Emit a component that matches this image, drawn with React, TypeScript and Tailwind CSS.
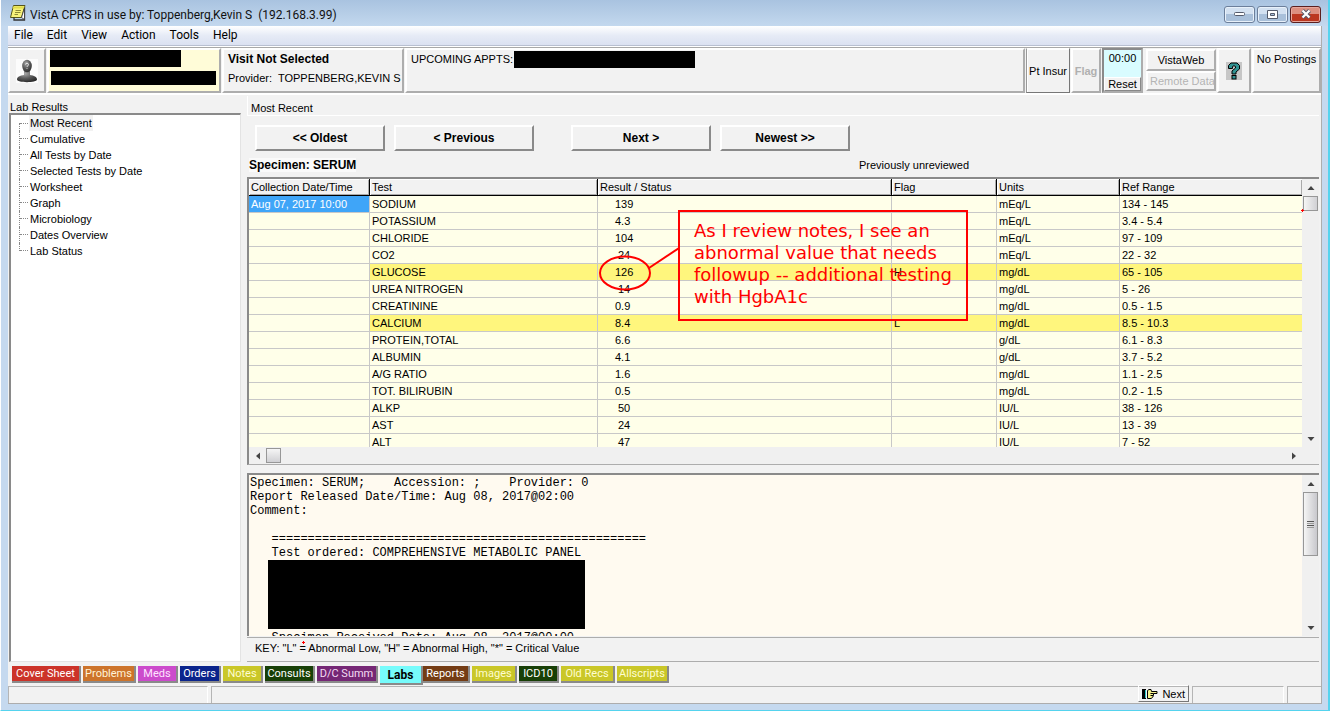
import type { ReactNode } from "react";

const SANS = "font-['Liberation_Sans',Arial,sans-serif]";
const UI = "font-[Roboto,'Segoe_UI',sans-serif]";

type Result = { test: string; value: string; flag: string; units: string; range: string };

const RESULTS: Result[] = [
  { test: "SODIUM", value: "139", flag: "", units: "mEq/L", range: "134 - 145" },
  { test: "POTASSIUM", value: "4.3", flag: "", units: "mEq/L", range: "3.4 - 5.4" },
  { test: "CHLORIDE", value: "104", flag: "", units: "mEq/L", range: "97 - 109" },
  { test: "CO2", value: "24", flag: "", units: "mEq/L", range: "22 - 32" },
  { test: "GLUCOSE", value: "126", flag: "H", units: "mg/dL", range: "65 - 105" },
  { test: "UREA NITROGEN", value: "14", flag: "", units: "mg/dL", range: "5 - 26" },
  { test: "CREATININE", value: "0.9", flag: "", units: "mg/dL", range: "0.5 - 1.5" },
  { test: "CALCIUM", value: "8.4", flag: "L", units: "mg/dL", range: "8.5 - 10.3" },
  { test: "PROTEIN,TOTAL", value: "6.6", flag: "", units: "g/dL", range: "6.1 - 8.3" },
  { test: "ALBUMIN", value: "4.1", flag: "", units: "g/dL", range: "3.7 - 5.2" },
  { test: "A/G RATIO", value: "1.6", flag: "", units: "mg/dL", range: "1.1 - 2.5" },
  { test: "TOT. BILIRUBIN", value: "0.5", flag: "", units: "mg/dL", range: "0.2 - 1.5" },
  { test: "ALKP", value: "50", flag: "", units: "IU/L", range: "38 - 126" },
  { test: "AST", value: "24", flag: "", units: "IU/L", range: "13 - 39" },
  { test: "ALT", value: "47", flag: "", units: "IU/L", range: "7 - 52" },
];

const TREE = [
  "Most Recent",
  "Cumulative",
  "All Tests by Date",
  "Selected Tests by Date",
  "Worksheet",
  "Graph",
  "Microbiology",
  "Dates Overview",
  "Lab Status",
];

const TABS = [
  { label: "Cover Sheet", look: "w-[69px] bg-[#cc3329] text-white" },
  { label: "Problems", look: "w-[53px] bg-[#cd742b] text-[#fff3d8]" },
  { label: "Meds", look: "w-10 bg-[#cc4bcc] text-[#ffe4ff]" },
  { label: "Orders", look: "w-[41px] bg-[#0a248c] text-white" },
  { label: "Notes", look: "w-10 bg-[#cac728] text-[#fffdd0]" },
  { label: "Consults", look: "w-[50px] bg-[#173f06] text-white" },
  { label: "D/C Summ", look: "w-[61px] bg-[#752775] text-[#f3dcf3]" },
  { label: "Labs", look: "-mr-0.5 w-[43px] bg-[#76fbfb] text-xs text-black font-bold" },
  { label: "Reports", look: "w-[47px] bg-[#743c14] text-white" },
  { label: "Images", look: "w-[45px] bg-[#cac728] text-[#fffdd0]" },
  { label: "ICD10", look: "w-10 bg-[#173f06] text-white" },
  { label: "Old Recs", look: "w-[54px] bg-[#cac728] text-[#fffdd0]" },
  { label: "Allscripts", look: "w-[52px] bg-[#cac728] text-[#fffdd0]" },
];

const REPORT = `Specimen: SERUM;    Accession: ;    Provider: 0
Report Released Date/Time: Aug 08, 2017@02:00
Comment:

   ====================================================
   Test ordered: COMPREHENSIVE METABOLIC PANEL`;

function NoteIcon() {
  return (
    <svg width="18" height="18" viewBox="0 0 18 18" aria-hidden="true">
      <path d="M4.5 1.5H16L12.5 13.5H1.5Z" fill="#f6f27a" stroke="#55551c" />
      <path d="M5 13.5V16H15.500V3" fill="none" stroke="#333" strokeWidth="1.300" />
      <path d="M12.500 13.500L15.500 15.500V4Z" fill="#fff" stroke="#333" strokeWidth=".8" />
      <path d="M4 2.500H15.500L15 4.500H3.500Z" fill="#e1dc4a" />
      <path d="M6.500 6.500H12M6 8.500H11.500M5.500 10.500H9" stroke="#8c8a35" />
    </svg>
  );
}

function PortraitIcon() {
  return (
    <svg width="22" height="24" viewBox="0 0 22 24" aria-hidden="true">
      <defs>
        <radialGradient id="head" cx=".4" cy=".3" r=".8">
          <stop offset="0" stopColor="#a8a8a8" />
          <stop offset=".5" stopColor="#5a5a5a" />
          <stop offset="1" stopColor="#222" />
        </radialGradient>
      </defs>
      <rect width="22" height="24" fill="#fcfcfc" />
      <path d="M8 11H14L14 16C18 16.500 21 18 21 20.500C21 24 1 24 1 20.500C1 18 4 16.500 8 16Z" fill="url(#head)" />
      <ellipse cx="11" cy="7" rx="4.800" ry="6.200" fill="url(#head)" />
      <path d="M9.500 5.500C9.500 3.800 12.500 3.800 12.500 5.500C12.500 6.800 11 6.800 11 8M11 9.300V10" fill="none" stroke="#e8e8e8" />
    </svg>
  );
}

function HelpIcon() {
  return (
    <svg width="16" height="18" viewBox="0 0 16 18" aria-hidden="true">
      <rect width="16" height="18" fill="#c6c6c6" />
      <path d="M2.500 6.500V3.500L5 1H11L13.500 3.500V7L10 10V12H6V9L9.500 6V4.500L9 4H7L6.500 4.500V6.500Z" fill="#2f9292" stroke="#000" />
      <rect x="6" y="13.500" width="4" height="3.500" fill="#2f9292" stroke="#000" />
    </svg>
  );
}

function HandIcon() {
  return (
    <svg width="16" height="12" viewBox="0 0 16 12" aria-hidden="true">
      <rect x="0" y="1" width="4" height="10" fill="#000" />
      <rect x="3" y="2" width="1" height="8" fill="#2bc5c5" />
      <path d="M5.500 2.500L7 1.500H9L9.500 3.500H15V5.500H11.500V7.500L10.500 9.500L9 10.500H5.500Z" fill="#f5f08a" stroke="#000" />
      <path d="M8.500 5.500H11.500M8.500 7.500H11" stroke="#000" />
    </svg>
  );
}

function Plus({ place }: { place: string }) {
  return (
    <svg className={`absolute ${place}`} width="3" height="3" viewBox="0 0 3 3" aria-hidden="true">
      <path d="M1 0H2V1H3V2H2V3H1V2H0V1H1Z" fill="#f00" />
    </svg>
  );
}

function Arrow({ dir }: { dir: "up" | "down" | "left" | "right" }) {
  const d = {
    up: "M0.500 6L4 2L7.500 6Z",
    down: "M0.500 2L4 6L7.500 2Z",
    left: "M6 0.500L2 4L6 7.500Z",
    right: "M2 0.500L6 4L2 7.500Z",
  }[dir];
  return (
    <button type="button" aria-label={`Scroll ${dir}`} className="flex size-[17px] shrink-0 items-center justify-center">
      <svg width="8" height="8" viewBox="0 0 8 8" aria-hidden="true">
        <path d={d} fill="#444" />
      </svg>
    </button>
  );
}

function Pane({ className, children }: { className: string; children?: ReactNode }) {
  return (
    <div className={`border-t-2 border-r-2 border-b-2 border-l-2 border-t-white border-l-white border-r-[#adadad] border-b-[#adadad] ${className}`}>
      {children}
    </div>
  );
}

function NavButton({ label, className }: { label: string; className: string }) {
  return (
    <button
      type="button"
      className={`h-[26px] border-2 border-t-white border-l-white border-r-[#8a8a8a] border-b-[#8a8a8a] text-xs font-bold ${className}`}
    >
      {label}
    </button>
  );
}

function TitleBar() {
  const box = "flex h-[17px] w-[31px] items-center justify-center rounded-[3px] border border-[#6c7f9b] bg-linear-to-b from-[#d3e1f1] from-50% to-[#a9c0da] to-50% shadow-[inset_0_0_0_1px_#e8f1fa]";
  return (
    <header className={`flex h-[26px] shrink-0 items-center bg-linear-to-b from-[#a9c3e0] to-[#c3d8ee] pr-[7px] pl-2 ${UI}`}>
      <NoteIcon />
      <h1 className="flex-1 pt-1 pl-[3px] text-xs whitespace-pre text-[#111]">VistA CPRS in use by: Toppenberg,Kevin S  (192.168.3.99)</h1>
      <div className="flex gap-[2px] pt-[2px]">
        <button type="button" aria-label="Minimize" className={box}>
          <svg width="12" height="6" viewBox="0 0 12 6"><rect x=".5" y="1.500" width="10" height="3" rx="1" fill="#fff" stroke="#555b6b" /></svg>
        </button>
        <button type="button" aria-label="Maximize" className={box}>
          <svg width="11" height="9" viewBox="0 0 11 9"><path d="M.5.500H10.500V8.500H.5ZM3.500 3.500V5.500H7.500V3.500Z" fill="#fff" stroke="#555b6b" fillRule="evenodd" /></svg>
        </button>
        <button type="button" aria-label="Close" className="flex h-[17px] w-[31px] items-center justify-center rounded-[3px] border border-[#5b1f1f] bg-linear-to-b from-[#dc8f80] from-50% to-[#bb3720] to-50% shadow-[inset_0_0_0_1px_#e7a79c]">
          <svg width="12" height="10" viewBox="0 0 12 10">
            <path d="M2.500 1.500L9.500 8.500M9.500 1.500L2.500 8.500" stroke="#555b6b" strokeWidth="4" />
            <path d="M2.500 1.500L9.500 8.500M9.500 1.500L2.500 8.500" stroke="#fff" strokeWidth="2.200" />
          </svg>
        </button>
      </div>
    </header>
  );
}

function Toolbar() {
  return (
    <section aria-label="Patient" className="flex h-[46px] shrink-0 gap-px border-t border-[#a8a8a8] text-xs leading-4">
      <Pane className="flex w-[38px] items-center justify-center"><PortraitIcon /></Pane>
      <Pane className="flex w-[174px] flex-col gap-1 bg-[#fffcd8] pl-px">
        <div className="h-[17px] w-[131px] bg-black" />
        <div className="ml-px h-[14px] w-[165px] bg-black" />
      </Pane>
      <Pane className="w-[182px] pl-1 whitespace-pre">
        <p className="pt-px font-bold">Visit Not Selected</p>
        <p className="pt-[3px] text-[11px]">Provider:  TOPPENBERG,KEVIN S</p>
      </Pane>
      <Pane className="flex flex-1 gap-px pl-1 text-[11px]">
        <p className="pt-px whitespace-nowrap">UPCOMING APPTS:</p>
        <div className="mt-px h-[17px] w-[181px] bg-black" />
      </Pane>
      <button type="button" className="w-11 border border-t-white border-r-[#777] border-b-[#777] border-l-[#999] text-[11px] whitespace-nowrap shadow-[inset_1px_1px_#fff]">Pt Insur</button>
      <button type="button" disabled className="w-[30px] border-2 border-t-white border-r-[#adadad] border-b-[#adadad] border-l-white text-[11px] font-bold text-[#b0b0b0]">Flag</button>
      <div className="flex w-[41px] flex-col border-2 border-t-[#8a8a8a] border-r-[#adadad] border-b-[#adadad] border-l-[#8a8a8a] bg-[#d9fcff] text-center">
        <span className="flex-1 text-[11px]">00:00</span>
        <button type="button" className="h-[14px] border border-t-white border-r-[#888] border-b-[#888] border-l-white bg-[#f2f2f2] text-[11px] leading-3">Reset</button>
      </div>
      <div className="flex w-[72px] flex-col pt-px pl-[2px] text-[11px]">
        <button type="button" className="h-[22px] border-2 border-t-white border-r-[#adadad] border-b-[#adadad] border-l-white">VistaWeb</button>
        <button type="button" disabled className="h-5 overflow-hidden border-2 border-t-white border-r-[#adadad] border-b-[#adadad] border-l-white pl-[2px] text-left whitespace-nowrap text-[#b4b4b4]">Remote Data</button>
      </div>
      <button type="button" aria-label="Help" className="flex w-[34px] items-center justify-center border-2 border-t-white border-r-[#adadad] border-b-[#adadad] border-l-white"><HelpIcon /></button>
      <Pane className="w-[69px] pt-px text-center text-[11px] whitespace-nowrap">No Postings</Pane>
    </section>
  );
}

function Sidebar() {
  return (
    <nav aria-label="Lab Results" className="flex w-[233px] shrink-0 flex-col pl-px">
      <h2 className="h-[18px] pt-1 pl-px leading-4">Lab Results</h2>
      <ul className="flex-1 border border-t-2 border-l-2 border-[#e3e3e3] border-t-[#8a8a8a] border-l-[#8a8a8a] bg-white pl-2">
        {TREE.map((item, i) => (
          <li key={item} className="flex h-4">
            <span className={`flex w-px flex-col border-l border-dotted border-[#888] ${i === 0 ? "mt-2 h-2" : i === TREE.length - 1 ? "h-2" : "h-4"}`} />
            <span className={`mr-px w-2 border-dotted border-[#888] ${i === 0 ? "mt-2 h-px border-t" : "h-2 border-b"}`} />
            <a href="#" className={`px-px leading-4 ${i === 0 ? "bg-[#f2f2f2]" : ""}`}>{item}</a>
          </li>
        ))}
      </ul>
    </nav>
  );
}

function Callout() {
  return (
    <div className="pointer-events-none absolute top-[31px] left-[349px] flex text-[#f00]">
      <svg className="mt-[10px]" width="81" height="74" viewBox="0 0 81 74" fill="none" stroke="#f00" strokeWidth="2" aria-hidden="true">
        <ellipse cx="27" cy="53" rx="25" ry="16.500" />
        <path d="M51 48L81 28" />
      </svg>
      <p className="-ml-px h-[111px] w-[290px] border-2 border-[#f00] pt-2 pl-[14px] font-['DejaVu_Sans',Verdana,sans-serif] text-lg leading-[22px] whitespace-nowrap">
        As I review notes, I see an
        <br />
        abnormal value that needs
        <br />
        followup -- additional testing
        <br />
        with HgbA1c
      </p>
    </div>
  );
}

function ResultsGrid() {
  const head = "h-[17px] border-r border-b border-black bg-[#f2f2f2] px-0.5 text-left font-normal shadow-[inset_1px_1px_#fff,inset_-1px_-1px_#aaa]";
  const cell = "h-[17px] border-r border-b border-[#c8c8c8] px-0.5";
  return (
    <div className="relative flex h-[288px] shrink-0 flex-col border-b border-[#adadad] border-t-[#8a8a8a] border-l-[#8a8a8a] border-t-2 border-l-2">
      <div className="flex min-h-0 flex-1">
        <div className="min-w-0 flex-1 overflow-hidden bg-[#ffffe9]">
          <table className="w-full table-fixed border-separate border-spacing-0 leading-4">
            <colgroup>
              <col className="w-[121px]" />
              <col className="w-[228px]" />
              <col className="w-[294px]" />
              <col className="w-[105px]" />
              <col className="w-[123px]" />
              <col />
            </colgroup>
            <thead>
              <tr>
                <th className={head}>Collection Date/Time</th>
                <th className={head}>Test</th>
                <th className={head}>Result / Status</th>
                <th className={head}>Flag</th>
                <th className={head}>Units</th>
                <th className={`${head} border-r-0`}>Ref Range</th>
              </tr>
            </thead>
            <tbody>
              {RESULTS.map((r, i) => {
                const tone = r.flag ? "bg-[#fff67d]" : "";
                return (
                  <tr key={r.test}>
                    <td className={`${cell} ${i === 0 ? "bg-[#3fa5f8] text-white" : ""}`}>{i === 0 ? "Aug 07, 2017 10:00" : ""}</td>
                    <td className={`${cell} ${tone}`}>{r.test}</td>
                    <td className={`${cell} ${tone}`}><span className={r.value.length === 2 ? "pl-[18px]" : "pl-[15px]"}>{r.value}</span></td>
                    <td className={`${cell} ${tone}`}>{r.flag}</td>
                    <td className={`${cell} ${tone}`}>{r.units}</td>
                    <td className={`${cell} ${tone} border-r-0`}>{r.range}</td>
                  </tr>
                );
              })}
            </tbody>
          </table>
        </div>
        <div className="relative flex w-[17px] flex-col bg-[#f0f0f0]">
          <Arrow dir="up" />
          <div className="mx-px h-[15px] border border-[#979797] bg-linear-to-r from-[#f5f5f5] to-[#d0d0d4]" />
          <div className="flex-1" />
          <Arrow dir="down" />
          <Plus place="top-[30px] -left-px" />
        </div>
      </div>
      <div className="flex h-[17px] shrink-0 items-center bg-[#f0f0f0] pr-[17px]">
        <Arrow dir="left" />
        <div className="h-[15px] w-[15px] border border-[#979797] bg-linear-to-b from-[#f5f5f5] to-[#d0d0d4]" />
        <div className="flex-1" />
        <Arrow dir="right" />
      </div>
      <Callout />
    </div>
  );
}

function ReportMemo() {
  return (
    <div className="mt-[8px] flex min-h-0 flex-1 border-t-2 border-l-2 border-[#8a8a8a]">
      <div className="min-w-0 flex-1 overflow-hidden bg-[#fffaf0] pt-px pl-px font-['Liberation_Mono','Courier_New',monospace] text-xs leading-[14px]">
        <pre className="font-[inherit]">{REPORT}</pre>
        <div className="ml-[18px] h-[69px] w-[317px] bg-black" />
        <pre className="mt-[2px] font-[inherit]">{"   Specimen Received Date: Aug 08, 2017@00:00"}</pre>
      </div>
      <div className="flex w-[17px] flex-col bg-[#f0f0f0]">
        <Arrow dir="up" />
        <div className="mx-px flex h-16 flex-col items-center justify-center gap-px border border-[#979797] bg-linear-to-r from-[#f5f5f5] to-[#c8c8cd]">
          <span className="h-px w-[7px] bg-[#555]" />
          <span className="h-px w-[7px] bg-[#999]" />
          <span className="h-px w-[7px] bg-[#555]" />
          <span className="h-px w-[7px] bg-[#999]" />
        </div>
        <div className="flex-1" />
        <Arrow dir="down" />
      </div>
    </div>
  );
}

export default function App() {
  return (
    <div className={`flex h-screen min-h-[600px] flex-col overflow-hidden border-r-2 border-b border-l border-r-[#55d3ee] border-b-[#55d3ee] border-l-white bg-[#c5d9ef] text-[11px] text-black ${SANS}`}>
      <TitleBar />
      <div className="mr-[6px] mb-[6px] ml-[7px] flex min-h-0 flex-1 flex-col border-r border-b border-[#adadad] bg-[#f2f2f2]">
        <nav aria-label="Menu" className={`flex h-5 shrink-0 gap-[14px] border-b border-[#b8bfd0] bg-linear-to-b from-white via-[#e6ebf6] to-[#dbe1f1] pl-[6px] text-xs leading-[19px] ${UI}`}>
          {["File", "Edit", "View", "Action", "Tools", "Help"].map((m) => (
            <button type="button" key={m}>{m}</button>
          ))}
        </nav>
        <div className="h-px shrink-0 bg-white" />
        <Toolbar />
        <main className="flex min-h-0 flex-1 gap-[6px] border-t-2 border-white">
          <Sidebar />
          <section className="flex min-w-0 flex-1 flex-col pt-px pr-[2px]">
            <h2 className="h-5 shrink-0 border-b border-white border-l pt-1 pl-[3px] leading-4">Most Recent</h2>
            <div className="flex gap-[9px] pt-[9px] pl-2">
              <NavButton label="<< Oldest" className="w-[130px]" />
              <NavButton label="< Previous" className="w-[140px]" />
              <NavButton label="Next >" className="ml-7 w-[140px]" />
              <NavButton label="Newest >>" className="w-[130px]" />
            </div>
            <div className="flex h-[26px] shrink-0 items-center pt-[2px] pl-[2px]">
              <p className="w-[610px] text-xs leading-4 font-bold"><span className="bg-[#fafafa]">Specimen: SERUM</span></p>
              <p>Previously unreviewed</p>
            </div>
            <ResultsGrid />
            <ReportMemo />
            <div className="relative mt-px h-[25px] shrink-0 border-t border-b border-[#adadad] pt-[2px] pl-[8px] leading-4">
              KEY: "L" = Abnormal Low, "H" = Abnormal High, "*" = Critical Value
              <Plus place="top-[3px] left-[55px]" />
            </div>
          </section>
        </main>
        <div role="tablist" className={`flex h-6 shrink-0 items-start gap-[2px] pt-1 pl-1 text-[11px] leading-[15px] ${UI}`}>
          {TABS.map((t) => (
            <button
              type="button"
              role="tab"
              aria-selected={t.label === "Labs"}
              key={t.label}
              className={`border-r-2 border-b-2 border-[#8a8a8a] text-center whitespace-nowrap ${t.label === "Labs" ? "h-[19px]" : "h-[17px]"} ${t.look}`}
            >
              {t.label}
            </button>
          ))}
        </div>
        <footer className="flex h-[17px] shrink-0 gap-[3px]">
          <div className="w-[200px] border-t border-r border-l border-[#b5b5b5] border-r-white" />
          <div className="flex flex-1 justify-end border-t border-l border-[#b5b5b5]">
            <button type="button" className="-mt-[2px] flex h-[17px] items-center gap-1 border border-t-white border-r-[#777] border-b-[#777] border-l-white px-[3px] leading-3">
              <HandIcon />
              Next
            </button>
          </div>
          <div className="w-[92px] border-t border-r border-l border-[#b5b5b5] border-r-white" />
          <div className="w-[34px] border-t border-l border-[#b5b5b5]" />
        </footer>
      </div>
    </div>
  );
}
